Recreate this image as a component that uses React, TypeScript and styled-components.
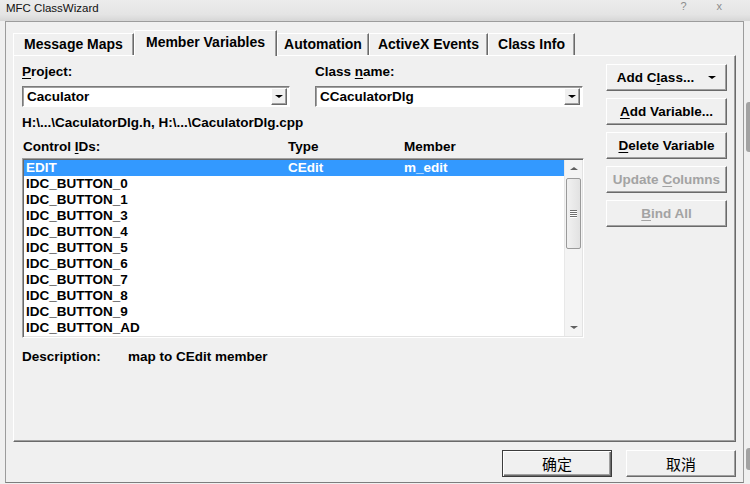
import React from 'react'
import styled, { createGlobalStyle } from 'styled-components'

const GlobalStyle = createGlobalStyle`
  html, body {
    margin: 0;
    padding: 0;
  }
  body {
    width: 750px;
    height: 484px;
    overflow: hidden;
    background: #f0f0f0;
    font-family: "Liberation Sans", Arial, sans-serif;
    color: #000;
  }
  u {
    text-decoration-thickness: 1px;
    text-underline-offset: 2px;
  }
`

const Screen = styled.div`
  width: 750px;
  height: 484px;
  display: flex;
  flex-direction: column;
  background: #f0f0f0;
`

const TitleBar = styled.div`
  height: 21px;
  display: flex;
  align-items: flex-start;
  padding: 0 6px;
  box-sizing: border-box;
  background: linear-gradient(180deg, #ececec 0%, #e4e4e4 70%, #d6d6d6 100%);
  font-size: 11.5px;
  line-height: 16px;
`

const TitleText = styled.span`
  flex: 1;
  color: #111;
`

const TitleGlyph = styled.span<{ $gap: number }>`
  margin-right: ${(p) => p.$gap}px;
  color: #8c8c8c;
  font-size: 11px;
  line-height: 12px;
`

const Body = styled.div`
  flex: 1;
  display: flex;
`

const Window = styled.div`
  margin-left: 5px;
  width: 739px;
  height: 462px;
  box-sizing: border-box;
  border: 1px solid #9c9c9c;
  border-bottom-color: #7d7d7d;
  padding: 8px 7px 0 7px;
  display: flex;
  flex-direction: column;
  background: #f0f0f0;
`

const SideStrip = styled.div`
  flex: 1;
  display: flex;
  flex-direction: column;
  align-items: flex-end;
`

const SideBar = styled.div<{ $top: number; $h: number }>`
  margin-top: ${(p) => p.$top}px;
  width: 4px;
  height: ${(p) => p.$h}px;
  border-radius: 3px 0 0 3px;
  background: #a3a3a3;
`

const TabStrip = styled.div`
  height: 25px;
  display: flex;
  align-items: flex-end;
`

const Tab = styled.div<{ $w: number; $active?: boolean }>`
  width: ${(p) => p.$w}px;
  height: ${(p) => (p.$active ? 26 : 22)}px;
  margin-bottom: ${(p) => (p.$active ? -1 : 0)}px;
  position: relative;
  z-index: ${(p) => (p.$active ? 2 : 1)};
  box-sizing: border-box;
  display: flex;
  align-items: center;
  justify-content: center;
  padding-bottom: ${(p) => (p.$active ? 4 : 1)}px;
  font-size: 14px;
  font-weight: bold;
  background: #f0f0f0;
  border-top: 1px solid #fff;
  border-left: 1px solid #fff;
  border-right: 1px solid #6a6a6a;
  box-shadow: inset -1px 0 0 #a0a0a0;
  white-space: nowrap;
`

const TabPanel = styled.div`
  height: 387px;
  box-sizing: border-box;
  border-top: 1px solid #fff;
  border-left: 1px solid #fff;
  border-right: 1px solid #6a6a6a;
  border-bottom: 1px solid #6a6a6a;
  box-shadow: inset -1px -1px 0 #a0a0a0;
  padding: 8px 7px 0 8px;
  display: flex;
  gap: 22px;
`

const LeftColumn = styled.div`
  width: 562px;
  display: flex;
  flex-direction: column;
`

const TopRow = styled.div`
  display: grid;
  grid-template-columns: 268px 268px;
  column-gap: 25px;
`

const Field = styled.div`
  display: flex;
  flex-direction: column;
`

const Label = styled.div<{ $mt?: number }>`
  margin-top: ${(p) => p.$mt ?? 0}px;
  font-size: 13.5px;
  font-weight: bold;
  line-height: 16px;
  white-space: nowrap;
`

const Combo = styled.div`
  margin-top: 6px;
  height: 21px;
  box-sizing: border-box;
  border: 1px solid;
  border-color: #7a7a7a #ffffff #ffffff #7a7a7a;
  box-shadow: inset 1px 1px 0 #a0a0a0;
  background: #fff;
  display: flex;
  align-items: center;
  padding: 0 2px 0 4px;
`

const ComboText = styled.span`
  flex: 1;
  font-size: 13.5px;
  font-weight: bold;
`

const ComboButton = styled.div`
  width: 16px;
  height: 17px;
  box-sizing: border-box;
  background: #f0f0f0;
  border: 1px solid;
  border-color: #fff #6a6a6a #6a6a6a #fff;
  box-shadow: inset -1px -1px 0 #a0a0a0;
  display: flex;
  align-items: center;
  justify-content: center;
`

const DownArrow = styled.span<{ $size: number; $color?: string }>`
  width: 0;
  height: 0;
  border-left: ${(p) => p.$size}px solid transparent;
  border-right: ${(p) => p.$size}px solid transparent;
  border-top: ${(p) => p.$size - 1}px solid ${(p) => p.$color ?? '#000'};
`

const UpArrow = styled.span<{ $size: number; $color?: string }>`
  width: 0;
  height: 0;
  border-left: ${(p) => p.$size}px solid transparent;
  border-right: ${(p) => p.$size}px solid transparent;
  border-bottom: ${(p) => p.$size - 1}px solid ${(p) => p.$color ?? '#000'};
`

const HeaderRow = styled.div`
  margin-top: 8px;
  display: grid;
  grid-template-columns: 265px 116px 1fr;
  padding-left: 1px;
  font-size: 13.5px;
  font-weight: bold;
  line-height: 16px;
`

const ListBox = styled.div`
  margin-top: 3px;
  height: 180px;
  box-sizing: border-box;
  border: 1px solid;
  border-color: #a0a0a0 #ffffff #ffffff #a0a0a0;
  box-shadow: inset 1px 1px 0 #696969, inset -1px -1px 0 #e3e3e3;
  background: #fff;
  display: flex;
  padding: 1px;
`

const Rows = styled.div`
  flex: 1;
  display: flex;
  flex-direction: column;
`

const Row = styled.div<{ $selected?: boolean }>`
  height: 16px;
  display: grid;
  grid-template-columns: 262px 116px 1fr;
  padding-left: 2px;
  font-size: 13.5px;
  font-weight: bold;
  line-height: 16px;
  background: ${(p) => (p.$selected ? '#3399ff' : 'transparent')};
  color: ${(p) => (p.$selected ? '#fff' : '#000')};
`

const ScrollBar = styled.div`
  width: 17px;
  display: flex;
  flex-direction: column;
  background: #f4f4f4;
  border-left: 1px solid #e8e8e8;
`

const ScrollArrow = styled.div`
  height: 17px;
  display: flex;
  align-items: center;
  justify-content: center;
`

const ScrollTrack = styled.div`
  flex: 1;
  display: flex;
  flex-direction: column;
  align-items: center;
`

const Thumb = styled.div`
  margin-top: 1px;
  width: 15px;
  height: 71px;
  box-sizing: border-box;
  border: 1px solid #9a9a9a;
  border-radius: 2px;
  background: linear-gradient(90deg, #f1f1f1, #e2e2e2);
  display: flex;
  flex-direction: column;
  align-items: center;
  justify-content: center;
  gap: 1px;
`

const Grip = styled.div`
  width: 7px;
  height: 1px;
  background: #6e6e6e;
  box-shadow: 0 1px 0 #fff;
`

const DescRow = styled.div`
  margin-top: 11px;
  display: grid;
  grid-template-columns: 106px 1fr;
  font-size: 13.5px;
  font-weight: bold;
  line-height: 16px;
`

const ButtonStack = styled.div`
  width: 121px;
  display: flex;
  flex-direction: column;
  gap: 7px;
`

const Button = styled.div<{ $disabled?: boolean }>`
  height: 27px;
  box-sizing: border-box;
  border: 1px solid;
  border-color: #fff #6a6a6a #6a6a6a #fff;
  box-shadow: inset -1px -1px 0 #a0a0a0;
  background: #f0f0f0;
  display: flex;
  align-items: center;
  justify-content: center;
  gap: 14px;
  font-size: 13.5px;
  font-weight: bold;
  color: ${(p) => (p.$disabled ? '#a3a3a3' : '#000')};
  white-space: nowrap;
`

const Footer = styled.div`
  flex: 1;
  display: flex;
  justify-content: flex-end;
  align-items: flex-start;
  padding-top: 8px;
  gap: 14px;
`

const DialogButton = styled.div<{ $default?: boolean }>`
  width: 110px;
  height: 27px;
  box-sizing: border-box;
  border: 1px solid;
  border-color: ${(p) => (p.$default ? '#3c3c3c' : '#fff #6a6a6a #6a6a6a #fff')};
  box-shadow: ${(p) =>
    p.$default
      ? 'inset 1px 1px 0 #fff, inset -1px -1px 0 #6a6a6a, inset -2px -2px 0 #a0a0a0'
      : 'inset -1px -1px 0 #a0a0a0'};
  background: #f0f0f0;
  display: flex;
  align-items: center;
  justify-content: center;
  font-family: "Noto Sans CJK SC", "Liberation Sans", sans-serif;
  font-size: 15px;
  line-height: 18px;
`

const tabs = [
  { name: 'Message Maps', w: 121 },
  { name: 'Member Variables', w: 143, active: true },
  { name: 'Automation', w: 92 },
  { name: 'ActiveX Events', w: 119 },
  { name: 'Class Info', w: 87 }
]

const controls = [
  { id: 'EDIT', type: 'CEdit', member: 'm_edit' },
  { id: 'IDC_BUTTON_0' },
  { id: 'IDC_BUTTON_1' },
  { id: 'IDC_BUTTON_3' },
  { id: 'IDC_BUTTON_4' },
  { id: 'IDC_BUTTON_5' },
  { id: 'IDC_BUTTON_6' },
  { id: 'IDC_BUTTON_7' },
  { id: 'IDC_BUTTON_8' },
  { id: 'IDC_BUTTON_9' },
  { id: 'IDC_BUTTON_AD' }
]

export default function App() {
  return (
    <>
      <GlobalStyle />
      <Screen>
        <TitleBar>
          <TitleText>MFC ClassWizard</TitleText>
          <TitleGlyph $gap={30}>?</TitleGlyph>
          <TitleGlyph $gap={22}>x</TitleGlyph>
        </TitleBar>
        <Body>
          <Window>
            <TabStrip>
              {tabs.map((t) => (
                <Tab key={t.name} $w={t.w} $active={t.active}>
                  {t.name}
                </Tab>
              ))}
            </TabStrip>
            <TabPanel>
              <LeftColumn>
                <TopRow>
                  <Field>
                    <Label>
                      <u>P</u>roject:
                    </Label>
                    <Combo>
                      <ComboText>Caculator</ComboText>
                      <ComboButton>
                        <DownArrow $size={4} />
                      </ComboButton>
                    </Combo>
                  </Field>
                  <Field>
                    <Label>
                      Class <u>n</u>ame:
                    </Label>
                    <Combo>
                      <ComboText>CCaculatorDlg</ComboText>
                      <ComboButton>
                        <DownArrow $size={4} />
                      </ComboButton>
                    </Combo>
                  </Field>
                </TopRow>
                <Label $mt={8}>H:\...\CaculatorDlg.h, H:\...\CaculatorDlg.cpp</Label>
                <HeaderRow>
                  <span>
                    Control <u>I</u>Ds:
                  </span>
                  <span>Type</span>
                  <span>Member</span>
                </HeaderRow>
                <ListBox>
                  <Rows>
                    {controls.map((c, i) => (
                      <Row key={c.id} $selected={i === 0}>
                        <span>{c.id}</span>
                        <span>{c.type}</span>
                        <span>{c.member}</span>
                      </Row>
                    ))}
                  </Rows>
                  <ScrollBar>
                    <ScrollArrow>
                      <UpArrow $size={4} $color="#606060" />
                    </ScrollArrow>
                    <ScrollTrack>
                      <Thumb>
                        <Grip />
                        <Grip />
                        <Grip />
                        <Grip />
                      </Thumb>
                    </ScrollTrack>
                    <ScrollArrow>
                      <DownArrow $size={4} $color="#606060" />
                    </ScrollArrow>
                  </ScrollBar>
                </ListBox>
                <DescRow>
                  <span>Description:</span>
                  <span>map to CEdit member</span>
                </DescRow>
              </LeftColumn>
              <ButtonStack>
                <Button>
                  <span>
                    Add C<u>l</u>ass...
                  </span>
                  <DownArrow $size={4} />
                </Button>
                <Button>
                  <span>
                    <u>A</u>dd Variable...
                  </span>
                </Button>
                <Button>
                  <span>
                    <u>D</u>elete Variable
                  </span>
                </Button>
                <Button $disabled>
                  <span>
                    Update <u>C</u>olumns
                  </span>
                </Button>
                <Button $disabled>
                  <span>
                    <u>B</u>ind All
                  </span>
                </Button>
              </ButtonStack>
            </TabPanel>
            <Footer>
              <DialogButton $default>确定</DialogButton>
              <DialogButton>取消</DialogButton>
            </Footer>
          </Window>
          <SideStrip>
            <SideBar $top={81} $h={50} />
            <SideBar $top={296} $h={22} />
          </SideStrip>
        </Body>
      </Screen>
    </>
  )
}
